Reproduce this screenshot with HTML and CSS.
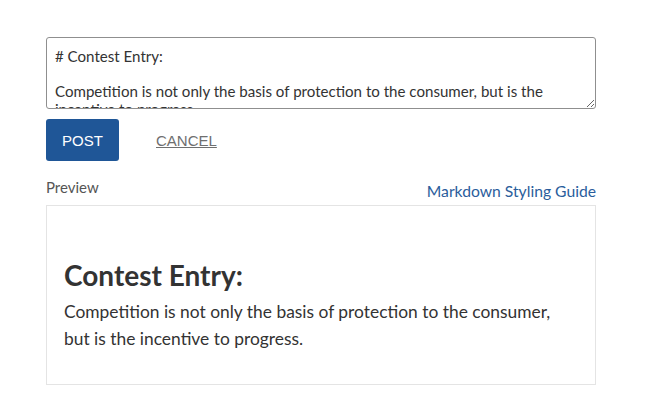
FILE: index.html
```html
<!DOCTYPE html>
<html>
<head>
<meta charset="utf-8">
<link rel="stylesheet" href="styles.css">
</head>
<body>
<div class="page">
  <textarea class="editor"># Contest Entry:

Competition is not only the basis of protection to the consumer, but is the incentive to progress.</textarea>
  <div class="actions">
    <button class="btn-post">POST</button>
    <a class="btn-cancel" href="#">CANCEL</a>
  </div>
  <div class="preview-head">
    <span class="preview-label">Preview</span>
    <a class="guide-link" href="#">Markdown Styling Guide</a>
  </div>
  <div class="preview-box">
    <h1 class="preview-title">Contest Entry:</h1>
    <p class="preview-text">Competition is not only the basis of protection to the consumer, but is the incentive to progress.</p>
  </div>
</div>
</body>
</html>
```
FILE: styles.css
```css
html, body {
  margin: 0;
  padding: 0;
  background: #ffffff;
}
body {
  font-family: "Lato", "Noto Sans", sans-serif;
}
.page {
  width: 550px;
  padding: 37px 0 0 46px;
}
.editor {
  display: block;
  box-sizing: border-box;
  width: 550px;
  height: 72px;
  margin: 0;
  padding: 10px 8px 6px 8px;
  border: 1px solid #8f8f8f;
  border-radius: 3px;
  font-family: "Lato", "Noto Sans", sans-serif;
  font-size: 15.1px;
  line-height: 17.5px;
  color: #333333;
  resize: vertical;
  overflow: hidden;
}
.actions {
  display: flex;
  align-items: center;
  margin-top: 10px;
}
.btn-post {
  width: 73px;
  height: 42px;
  border: none;
  border-radius: 3px;
  background: #1f5697;
  color: #ffffff;
  font-family: "Liberation Sans", Arial, sans-serif;
  font-size: 15px;
  padding: 0;
}
.btn-cancel {
  margin-left: 37px;
  font-family: "Liberation Sans", Arial, sans-serif;
  font-size: 15px;
  color: #6f6f6f;
  text-decoration: underline;
}
.preview-head {
  display: flex;
  justify-content: space-between;
  align-items: flex-end;
  margin-top: 17px;
  height: 27px;
}
.preview-label {
  font-size: 15px;
  color: #555555;
  align-self: flex-start;
}
.guide-link {
  font-size: 15.7px;
  color: #2a5d9c;
  text-decoration: none;
  padding-bottom: 5px;
}
.preview-box {
  box-sizing: border-box;
  height: 180px;
  border: 1px solid #e4e4e4;
  padding: 53px 30px 0 17px;
}
.preview-title {
  margin: 0;
  font-size: 28px;
  font-weight: 700;
  color: #333333;
  line-height: 32px;
}
.preview-text {
  margin: 7px 0 0 0;
  font-size: 17.4px;
  line-height: 27px;
  color: #333333;
}
```
